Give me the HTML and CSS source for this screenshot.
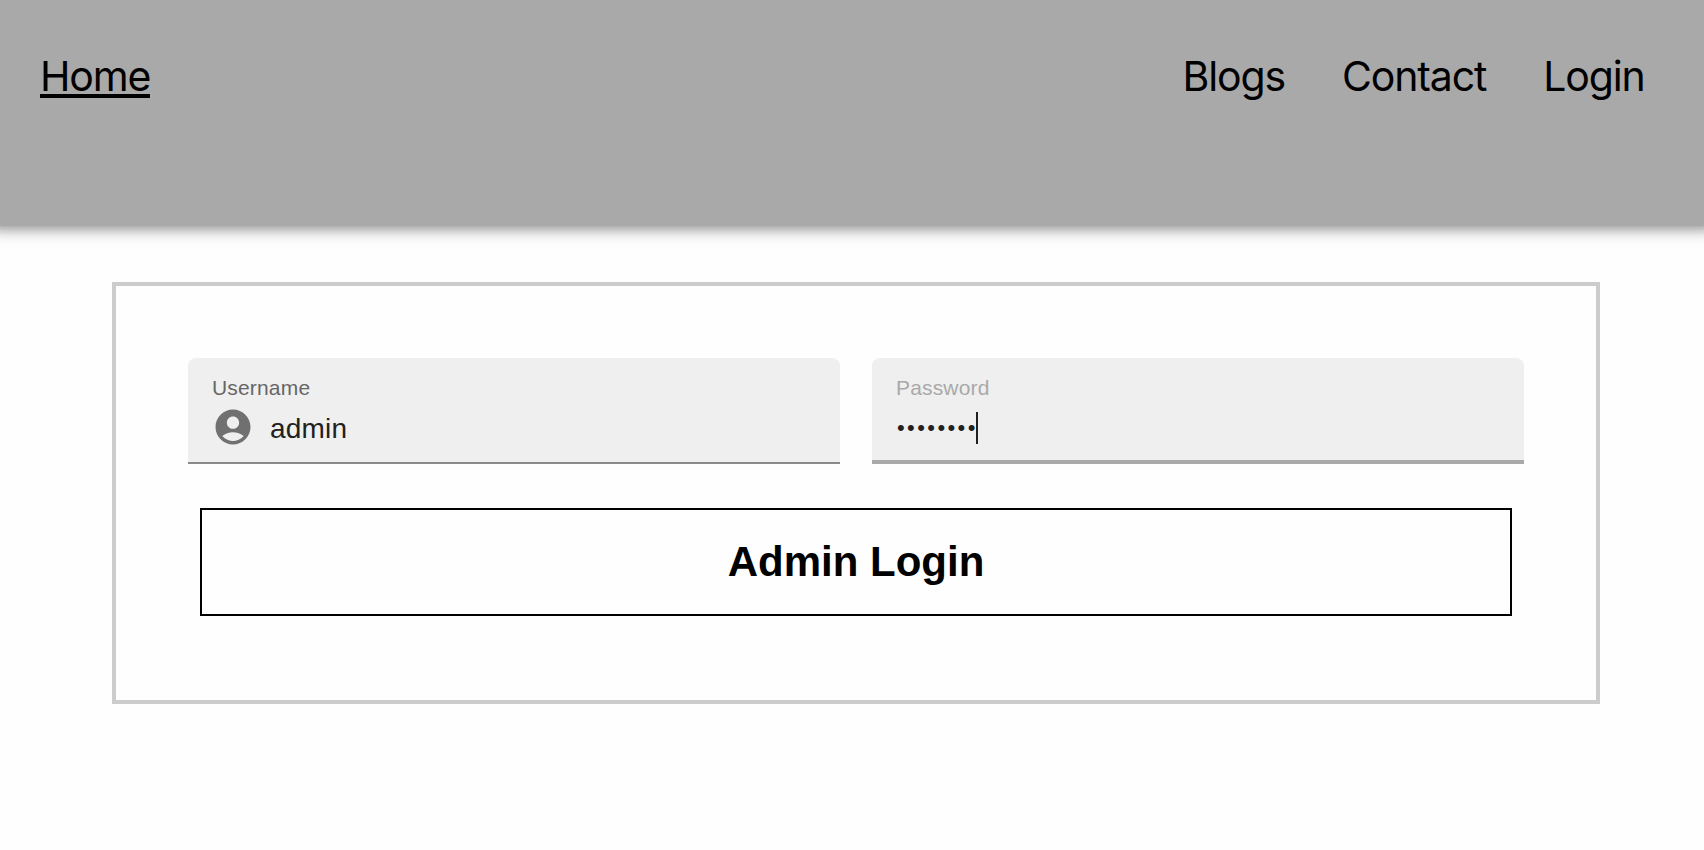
FILE: index.html
```html
<!DOCTYPE html>
<html lang="en">
<head>
<meta charset="utf-8">
<title>Admin Login</title>
<link rel="stylesheet" href="styles.css">
</head>
<body>
<header class="header">
  <a class="link link-home">Home</a>
  <nav class="nav">
    <a class="link">Blogs</a>
    <a class="link">Contact</a>
    <a class="link">Login</a>
  </nav>
</header>
<main class="panel">
  <div class="fields">
    <div class="field">
      <span class="label">Username</span>
      <div class="value">
        <svg class="icon" viewBox="0 0 24 24"><path d="M12 2C6.48 2 2 6.48 2 12s4.48 10 10 10 10-4.48 10-10S17.52 2 12 2zm0 4c1.93 0 3.5 1.57 3.5 3.5S13.93 13 12 13s-3.5-1.57-3.5-3.5S10.07 6 12 6zm0 14c-2.03 0-4.43-.82-6.14-2.88C7.55 15.8 9.68 15 12 15s4.45.8 6.14 2.12C16.43 19.18 14.03 20 12 20z"/></svg>
        <span class="text">admin</span>
      </div>
    </div>
    <div class="field field-focused">
      <span class="label">Password</span>
      <div class="value">
        <span class="dots">••••••••</span><span class="caret"></span>
      </div>
    </div>
  </div>
  <button class="submit">Admin Login</button>
</main>
</body>
</html>
```
FILE: styles.css
```css
* {
  box-sizing: border-box;
}

body {
  margin: 0;
  overflow: hidden;
  background: #fefefe;
  font-family: "Liberation Sans", sans-serif;
}

.header {
  display: flex;
  justify-content: space-between;
  height: 226px;
  margin: 0 -8px;
  padding: 51px 67.5px 0 48px;
  background: #a9a9a9;
  box-shadow: 0 4px 8px -2px rgba(0, 0, 0, .2), 0 8px 10px rgba(0, 0, 0, .14), 0 2px 20px rgba(0, 0, 0, .12);
}

.nav {
  display: flex;
  gap: 57px;
}

.link {
  height: 50px;
  font: 41px/50px Inter, sans-serif;
  letter-spacing: -1.15px;
  color: #000;
}

.link-home {
  height: 47px;
  border-bottom: 4px solid #000;
}

.panel {
  width: 1488px;
  height: 422px;
  margin: 56px 0 0 112px;
  padding: 72px;
  border: 4px solid #ccc;
}

.fields {
  display: grid;
  grid-template-columns: 1fr 1fr;
  gap: 32px;
}

.field {
  height: 106px;
  padding: 18px 24px 0;
  border-radius: 8px 8px 0 0;
  border-bottom: 2px solid #8a8a8a;
  background: #efefef;
}

.field-focused {
  border-bottom: 4px solid #a9a9a9;
}

.label {
  display: block;
  font-size: 21px;
  line-height: 24px;
  letter-spacing: .17px;
  color: #666;
}

.field-focused .label {
  color: #a9a9a9;
}

.value {
  display: flex;
  align-items: center;
  height: 32px;
  margin-top: 12px;
  color: #212121;
}

.icon {
  flex: none;
  width: 42px;
  height: 42px;
  margin: -3px 16px 0 0;
  fill: #707070;
}

.text {
  padding-top: 2px;
  font-size: 28px;
  line-height: 32px;
  letter-spacing: .2px;
}

.dots {
  width: 80px;
  padding-left: 1px;
  font-size: 22px;
  line-height: 30px;
  letter-spacing: 2.4px;
  white-space: nowrap;
}

.caret {
  width: 2px;
  height: 32px;
  background: #212121;
}

.submit {
  display: block;
  width: 1312px;
  height: 108px;
  margin: 44px 0 0 12px;
  padding: 0;
  border: 2px solid #000;
  background: #fefefe;
  font: bold 42px "Liberation Sans", sans-serif;
  letter-spacing: 0;
  color: #000;
}
```
